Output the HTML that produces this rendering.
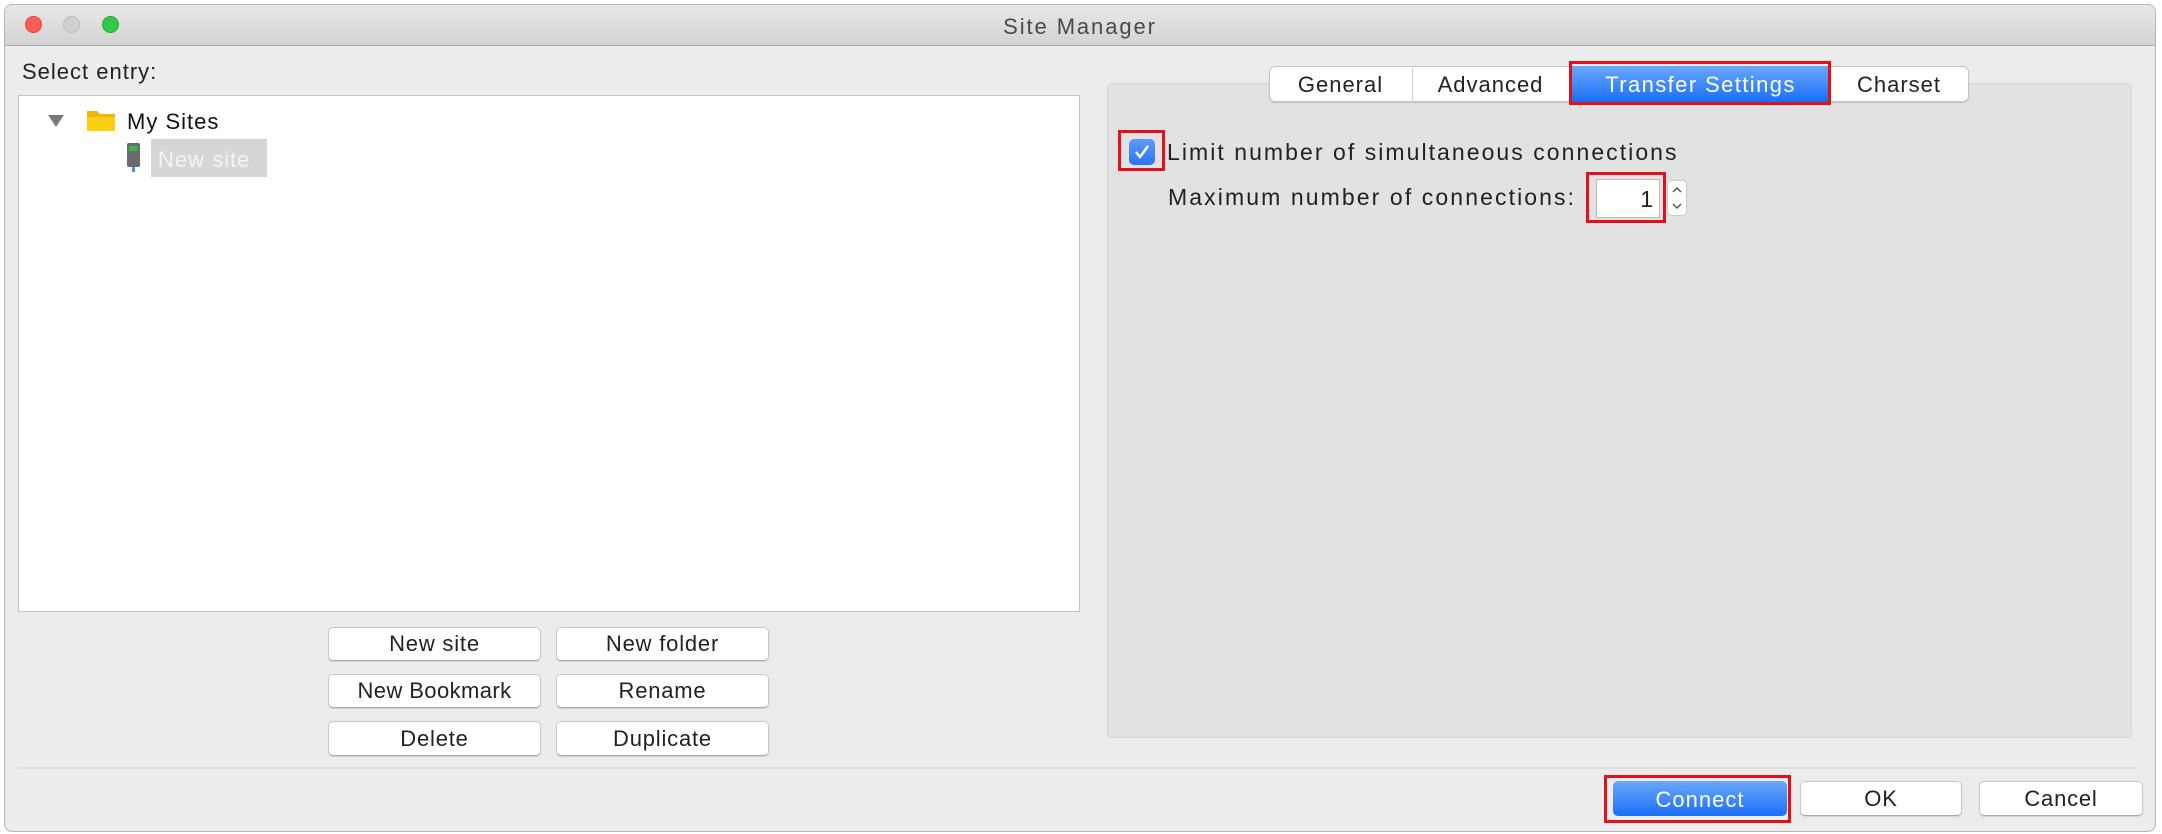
<!DOCTYPE html>
<html><head><style>
*{box-sizing:border-box;margin:0;padding:0}
body{width:2162px;height:834px;background:#fff;font-family:"Liberation Sans",sans-serif;position:relative;overflow:hidden;color:#222}
.a{position:absolute}
.win{left:4px;top:4px;width:2152px;height:828px;background:#ececec;border:1px solid #b5b5b5;border-radius:8px;overflow:hidden}
.tb{left:0;top:0;width:100%;height:41px;background:linear-gradient(#e8e8e8,#d3d3d3);border-bottom:1px solid #b0b0b0}
.dot{width:17px;height:17px;border-radius:50%;top:11px}
.t{font-size:22px;white-space:nowrap;letter-spacing:1px}
.btn{background:#fff;border:1px solid #c8c8c8;border-bottom-color:#aaa;border-radius:5px;font-size:22px;letter-spacing:0.8px;text-align:center;box-shadow:0 1px 1px rgba(0,0,0,.12)}
.red{border:3px solid #e3101c}
</style></head><body>
<div class="a win">
 <div class="a tb"></div>
 <div class="a dot" style="left:20px;background:#fc5f57;border:1px solid #e0443e"></div>
 <div class="a dot" style="left:58px;background:#d0d0d0;border:1px solid #bcbcbc"></div>
 <div class="a dot" style="left:97px;background:#34c84a;border:1px solid #27aa35"></div>
 <div class="a t" style="left:0;width:100%;text-align:center;top:9px;color:#4a4a4a;letter-spacing:1.9px">Site Manager</div>
</div>
<div class="a t" style="left:22px;top:59px">Select entry:</div>
<div class="a" style="left:18px;top:95px;width:1062px;height:517px;background:#fff;border:1px solid #c3c3c3"></div>
<div class="a" style="left:48px;top:115px;width:0;height:0;border-left:8px solid transparent;border-right:8px solid transparent;border-top:12px solid #7a7a7a"></div>
<svg class="a" style="left:86px;top:108px" width="30" height="24"><path d="M1 3h10l3 3h15v17H1z" fill="#f1b505"/><path d="M1 9h28v14H1z" fill="#fccf12"/></svg>
<div class="a t" style="left:127px;top:109px;color:#111">My Sites</div>
<svg class="a" style="left:126px;top:143px" width="16" height="30"><rect x="1" y="0" width="13" height="24" rx="2" fill="#6a6a6a"/><rect x="3" y="3" width="9" height="5" fill="#3fb34f"/><rect x="6" y="24" width="3" height="5" fill="#4a90e2"/></svg>
<div class="a" style="left:151px;top:139px;width:116px;height:38px;background:#d6d6d6"></div>
<div class="a t" style="left:158px;top:147px;color:#f4f4f4">New site</div>

<div class="a btn" style="left:328px;top:627px;width:213px;height:34px;line-height:32px">New site</div>
<div class="a btn" style="left:556px;top:627px;width:213px;height:34px;line-height:32px">New folder</div>
<div class="a btn" style="left:328px;top:674px;width:213px;height:34px;line-height:32px;letter-spacing:0.4px">New Bookmark</div>
<div class="a btn" style="left:556px;top:674px;width:213px;height:34px;line-height:32px">Rename</div>
<div class="a btn" style="left:328px;top:721px;width:213px;height:35px;line-height:33px">Delete</div>
<div class="a btn" style="left:556px;top:721px;width:213px;height:35px;line-height:33px">Duplicate</div>

<div class="a" style="left:1107px;top:83px;width:1025px;height:655px;background:#e2e2e2;border:1px solid #d6d6d6;border-radius:5px"></div>
<div class="a" style="left:1269px;top:66px;width:700px;height:36px;background:#fff;border:1px solid #c6c6c6;border-radius:6px;box-shadow:0 1px 1px rgba(0,0,0,.15)"></div>
<div class="a t" style="left:1269px;top:72px;width:143px;text-align:center">General</div>
<div class="a" style="left:1412px;top:67px;width:1px;height:34px;background:#d0d0d0"></div>
<div class="a t" style="left:1412px;top:72px;width:157px;text-align:center">Advanced</div>
<div class="a" style="left:1572px;top:66px;width:257px;height:36px;background:linear-gradient(#6aa8fb,#1a6ef7)"></div>
<div class="a t" style="left:1572px;top:72px;width:257px;text-align:center;color:#fff;letter-spacing:1.4px">Transfer Settings</div>
<div class="a red" style="left:1569px;top:61px;width:262px;height:44px"></div>
<div class="a t" style="left:1829px;top:72px;width:140px;text-align:center">Charset</div>

<div class="a" style="left:1129px;top:139px;width:26px;height:26px;border-radius:5px;background:linear-gradient(#5e9cf8,#2a74f2)"></div>
<svg class="a" style="left:1129px;top:139px" width="26" height="26"><path d="M7 13l4 5 8-11" stroke="#fff" stroke-width="2.5" fill="none"/></svg>
<div class="a red" style="left:1118px;top:130px;width:47px;height:41px"></div>
<div class="a t" style="left:1167px;top:139px;font-size:23px;letter-spacing:2.05px">Limit number of simultaneous connections</div>
<div class="a t" style="left:1168px;top:184px;font-size:23px;letter-spacing:2.1px">Maximum number of connections:</div>
<div class="a" style="left:1596px;top:179px;width:64px;height:39px;background:#fff;border:1px solid #bbb"></div>
<div class="a t" style="left:1596px;top:186px;width:58px;text-align:right;font-size:23px">1</div>
<div class="a red" style="left:1586px;top:172px;width:80px;height:51px"></div>
<div class="a" style="left:1667px;top:180px;width:20px;height:36px;background:#fff;border:1px solid #ccc;border-radius:5px"></div>
<svg class="a" style="left:1667px;top:180px" width="20" height="36"><path d="M6 12l4-4 4 4M6 24l4 4 4-4" stroke="#555" stroke-width="1.5" fill="none"/></svg>

<div class="a" style="left:18px;top:767px;width:2118px;height:2px;background:#dcdcdc"></div>
<div class="a" style="left:1613px;top:781px;width:174px;height:35px;border-radius:5px;background:linear-gradient(#6aa8fb,#1a6ef7)"></div>
<div class="a t" style="left:1613px;top:787px;width:174px;text-align:center;color:#fff">Connect</div>
<div class="a red" style="left:1604px;top:775px;width:187px;height:48px"></div>
<div class="a btn" style="left:1800px;top:781px;width:162px;height:35px;line-height:33px">OK</div>
<div class="a btn" style="left:1979px;top:781px;width:164px;height:35px;line-height:33px">Cancel</div>
</body></html>
